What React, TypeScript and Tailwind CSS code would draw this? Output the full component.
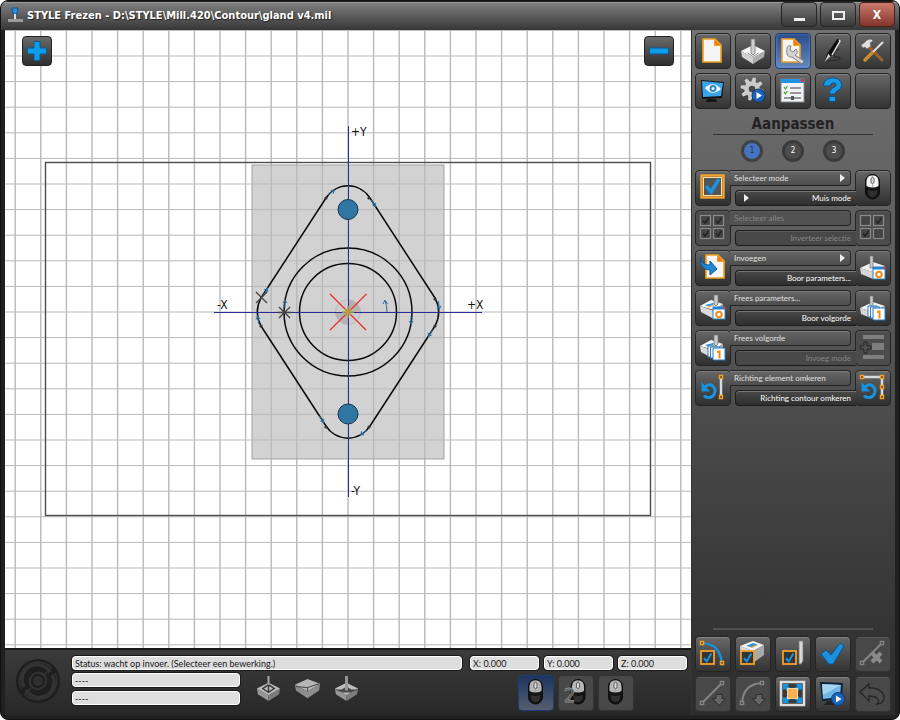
import type { ReactNode } from "react";

type IconProps = { children: ReactNode };

function Icon({ children }: IconProps) {
  return (
    <svg viewBox="0 0 36 36" className="size-9 shrink-0" aria-hidden="true">
      {children}
    </svg>
  );
}

/* ---------- drawing parts ---------- */

function PageShape({ x = 9, y = 6 }: { x?: number; y?: number }) {
  return (
    <g transform={`translate(${x} ${y})`}>
      <path d="M1 1h12l6 6v17H1z" fill="#f5f5f8" stroke="#f0a21e" strokeWidth="1.6" />
      <path d="M12.5 1l6.5 6.5h-6.5z" fill="#f47b12" stroke="#f0a21e" />
    </g>
  );
}

function Block({ tone = "light" }: { tone?: "light" | "grey" }) {
  const c = tone === "light" ? ["#f6f6f6", "#d2d2d2", "#aeaeae"] : ["#bdbdbd", "#969696", "#7c7c7c"];
  return (
    <g>
      <path d="M6 18l12-6 12 6-12 7z" fill={c[0]} />
      <path d="M6 18l12 7v6L7 24z" fill={c[1]} />
      <path d="M30 18l-12 7v6l11-7z" fill={c[2]} />
    </g>
  );
}

function SlabBlock() {
  return (
    <g>
      <path d="M5 16l11-6 12 4-9 6z" fill="#f8f8f8" />
      <path d="M10 15l8-2 3 1c-3 0-5 3-9 2z" fill="#3a94d2" />
      <path d="M11 16.500c4 1 6-2 10-2l-7 3z" fill="#f2a53a" />
      <path d="M5 16l14 5v8L6 22z" fill="#dcdcdc" />
      <path d="M19 21l9-7v8l-9 7z" fill="#a6a6a6" />
      <path d="M19 5h4v9l-2 2-2-2z" fill="#c9c9c9" stroke="#777" strokeWidth=".7" />
    </g>
  );
}

function DrillBlock() {
  return (
    <g>
      <path d="M5 18l13-6 12 4-12 6z" fill="#f0f0f0" />
      <path d="M5 18l13 4v7L6 24z" fill="#d6d6d6" />
      <path d="M30 16l-12 6v7l12-6z" fill="#a5a5a5" />
      <path d="M15 6h3v12h-3z" fill="#ccc" stroke="#777" strokeWidth=".7" />
    </g>
  );
}

function CheckBoxShape({ x, y, s = 13 }: { x: number; y: number; s?: number }) {
  return (
    <g>
      <rect x={x} y={y} width={s} height={s} fill="#343434" stroke="#f2a02c" strokeWidth="1.8" />
      <path
        d={`M${x + s * 0.22} ${y + s * 0.55}l${s * 0.22} ${s * 0.25}l${s * 0.36} ${-s * 0.6}`}
        fill="none"
        stroke="#1596e6"
        strokeWidth="2"
      />
    </g>
  );
}

function MouseShape({ dim = false }: { dim?: boolean }) {
  const top = dim ? "#b5b5b5" : "#f1f1f1";
  return (
    <g>
      <rect x="10.500" y="4.500" width="14" height="24.500" rx="7" fill="#141414" stroke="#0b0b0b" />
      <path d="M11.500 16c-.5-8 1-10.500 6-10.500s6.500 2.500 6 10.500q-6 3-12 0z" fill={top} />
      <path d="M13 20q4.500 2 9 0v3q-1 4-4.500 4t-4.500-4z" fill="#303030" />
      <rect x="16" y="7.500" width="3" height="6" rx="1.500" fill="#ddd" stroke="#555" strokeWidth=".9" />
      <path d="M17.500 5.500v2M17.500 13.500v3.500" stroke="#999" strokeWidth=".7" />
    </g>
  );
}

function NumberCards() {
  return (
    <g>
      <path d="M13 16h9v11h-9z" fill="#fff" stroke="#2b79bd" />
      <path d="M15.500 17h9v11h-9z" fill="#fff" stroke="#2b79bd" />
      <path d="M18 18h12v12H18z" fill="#fff" stroke="#2b79bd" />
      <path d="M22 22l2.500-.5v7" fill="none" stroke="#f08c15" strokeWidth="2" />
    </g>
  );
}

function ParameterCard() {
  return (
    <g>
      <rect x="18" y="17" width="12" height="12" fill="#fff" stroke="#2f7fc4" />
      <path d="M18 17h12v2.500H18z" fill="#2183d8" />
      <path d="M28 17h2v2h-2z" fill="#e33" />
      <circle cx="24" cy="24.500" r="2.800" fill="none" stroke="#f08c15" strokeWidth="2" />
    </g>
  );
}

function Node({ x, y, c = "#f2a02c" }: { x: number; y: number; c?: string }) {
  return <rect x={x - 1.5} y={y - 1.5} width="3" height="3" fill="#402c12" stroke={c} strokeWidth="1.500" />;
}

function RotateArrow() {
  return (
    <g>
      <path d="M10 17c5-5 12 0 9.500 6.500-2 5-8 5-10.500 2" fill="none" stroke="#1793df" strokeWidth="3" />
      <path d="M6.500 12v9.500H15z" fill="#1793df" />
    </g>
  );
}

function PlayBadge({ x = 24, y = 24 }: { x?: number; y?: number }) {
  return (
    <g>
      <circle cx={x} cy={y} r="6.500" fill="#1a63b8" stroke="#123c78" />
      <path d={`M${x - 2} ${y - 3.5}l5.500 3.500-5.500 3.500z`} fill="#fff" />
    </g>
  );
}

function CheckGrid({ checked }: { checked: number[] }) {
  const cells = [
    [5.5, 5.5],
    [18.5, 5.5],
    [5.5, 18.5],
    [18.5, 18.5],
  ];
  return (
    <g fill="none" stroke="#8b8b8b" strokeWidth="1.200">
      {cells.map(([x, y], i) => (
        <g key={i}>
          <rect x={x} y={y} width="10" height="10" fill="#444" />
          {checked.includes(i) && <path d={`M${x + 2.5} ${y + 5}l2 2.500 3.500-5`} stroke="#222" strokeWidth="1.400" />}
        </g>
      ))}
    </g>
  );
}

function DropMarker() {
  return <path d="M21 18.500h6v4h3.500l-6.500 7-6.500-7H21z" fill="#656565" stroke="#2c2c2c" />;
}

/* ---------- icons ---------- */

const gearTeeth = [0, 45, 90, 135, 180, 225, 270, 315];

const icons = {
  newPage: <PageShape x={7} y={5} />,
  block: (
    <g>
      <Block />
      <path d="M16 6h4v14l-2 2-2-2z" fill="#cfcfcf" stroke="#777" strokeWidth=".8" />
      <path d="M12.500 20l5.500 3.500 5.500-3.500" fill="none" stroke="#8b8b8b" />
    </g>
  ),
  edit: (
    <g>
      <PageShape x={6} y={5} />
      <path
        d="M12 16c0-3 2-4 4-3l-1 4 3 2 3-3c2 3 1 5-1 6l9 6-2 3-10-7c-4 1-6-3-5-8z"
        fill="#d4d4d4"
        stroke="#777"
        strokeWidth=".9"
      />
    </g>
  ),
  pen: (
    <g>
      <path d="M10 28c8 0 16-1 15-3-1-3-6 1-6-3s2-5 5-6" fill="none" stroke="#292929" strokeWidth="1.200" />
      <path d="M22 6l3 1-9 16-6 5 2-7z" fill="#0d0d0d" />
      <path d="M24 7l1 1-8 14" fill="none" stroke="#e7e7e7" strokeWidth="1.400" />
      <path d="M13.500 20.500L9.500 29l6-5.500" fill="#ccc" />
    </g>
  ),
  tools: (
    <g>
      <path d="M15 15l12 12" stroke="#a0622a" strokeWidth="3" strokeLinecap="round" />
      <path d="M28 9L17 20" stroke="#e5e5e5" strokeWidth="1.800" />
      <path d="M17 20l-7 7" stroke="#c98c2c" strokeWidth="3.600" strokeLinecap="round" />
      <path d="M6 12l3-2 3-3 4-1 2 2-3 2 1 3-4 3-2-2-2 1z" fill="#dedede" stroke="#666" strokeWidth=".6" />
    </g>
  ),
  view: (
    <g>
      <path d="M6 7l23 2-2 16-20 1z" fill="#111" />
      <path d="M7 8l21 2-2 13-18 1z" fill="#3aa6ea" />
      <path d="M13 26h8l1 3H10z" fill="#151515" />
      <path d="M10 15q8-8 16 1-9 8-16-1z" fill="#fff" />
      <circle cx="18" cy="15.500" r="3.500" fill="#2c84cb" />
      <circle cx="18" cy="15.500" r="1.500" fill="#fff" />
    </g>
  ),
  run: (
    <g>
      <g fill="#cfcfcf">
        {gearTeeth.map((a) => (
          <path key={a} d="M-2.200-7l.7-4.500h3l.7 4.500z" transform={`translate(17 16) rotate(${a + 12})`} />
        ))}
      </g>
      <circle cx="17" cy="16" r="5.500" fill="#484848" stroke="#cacaca" strokeWidth="4.500" />
      <PlayBadge x={23.500} y={22.500} />
    </g>
  ),
  settings: (
    <g>
      <rect x="6" y="6" width="23" height="23" fill="#f0f3f8" stroke="#888" />
      <path d="M6 6h23v4H6z" fill="#2193e3" />
      <path d="M26 6h3v3h-3z" fill="#d33" />
      <path d="M9 14l1.500 2 2-3M9 19l1.500 2 2-3" fill="none" stroke="#55a53c" strokeWidth="1.300" />
      <path d="M15 15h11M15 20h11M9 25h17" stroke="#777" strokeWidth="1.400" />
      <path d="M16 23h3v4h-3z" fill="#555" />
    </g>
  ),
  help: (
    <g>
      <path
        d="M8.500 13c0-11 18-10.500 18-1 0 6-6.500 5-6.500 9h-5.500c0-7 6.500-6 6.500-9 0-3-5-3-6 1z"
        fill="#169be6"
        stroke="#07538f"
      />
      <rect x="14" y="23.500" width="6.500" height="5" rx="1" fill="#169be6" stroke="#07538f" />
    </g>
  ),
  bigCheck: (
    <g>
      <rect x="6.500" y="5.500" width="22" height="22" fill="#555" stroke="#f5a32f" strokeWidth="2.400" />
      <rect x="8.500" y="7.500" width="18" height="18" fill="none" stroke="#fce0a4" />
      <path d="M11 16l5 6 8-13" fill="none" stroke="#1793e2" strokeWidth="3.500" />
    </g>
  ),
  mouse: <MouseShape />,
  mouseDim: <MouseShape dim />,
  doubleMouse: (
    <g>
      <g transform="translate(2.500 0)">
        <MouseShape dim />
      </g>
      <text
        x="6"
        y="27"
        fontSize="20"
        fill="#3a3a3a"
        stroke="#8e8e8e"
        strokeWidth=".8"
        className="font-['DejaVu_Sans_Condensed','DejaVu_Sans',sans-serif]"
      >
        2
      </text>
    </g>
  ),
  selectAll: <CheckGrid checked={[0, 1, 2, 3]} />,
  invert: <CheckGrid checked={[1, 2]} />,
  insert: (
    <g>
      <PageShape x={10} y={4} />
      <path d="M6 7c0 6 3 8 9 8v-4l7 8-7 6v-5C8 20 4 14 6 7z" fill="#2187d2" stroke="#0d579a" />
    </g>
  ),
  millParams: (
    <g>
      <SlabBlock />
      <ParameterCard />
    </g>
  ),
  drillParams: (
    <g>
      <DrillBlock />
      <ParameterCard />
    </g>
  ),
  millOrder: (
    <g>
      <SlabBlock />
      <NumberCards />
    </g>
  ),
  drillOrder: (
    <g>
      <DrillBlock />
      <NumberCards />
    </g>
  ),
  insertMode: (
    <g fill="#7e7e7e">
      <path d="M8 5h21v4H8zM17 13h12v7H17zM8 25h21v4H8z" />
      <path d="M9 12h3v4h4v3h-4v4H9v-4H5v-3h4z" fill="#555" stroke="#222" />
    </g>
  ),
  reverseElement: (
    <g>
      <RotateArrow />
      <path d="M26 7v20" stroke="#d6dde2" strokeWidth="2.500" />
      <Node x={26} y={7} />
      <Node x={26} y={27} />
    </g>
  ),
  reverseContour: (
    <g>
      <RotateArrow />
      <path d="M7 7h20v20" fill="none" stroke="#d6dde2" strokeWidth="2.500" />
      <Node x={7} y={7} />
      <Node x={27} y={7} />
      <Node x={27} y={17} />
      <Node x={27} y={27} />
    </g>
  ),
  arcCheck: (
    <g>
      <path d="M7 7c12 1 18 6 20 20" fill="none" stroke="#1793e2" strokeWidth="2.200" />
      <Node x={7} y={7} />
      <Node x={27} y={27} />
      <CheckBoxShape x={6} y={15} />
    </g>
  ),
  pocketCheck: (
    <g>
      <path d="M5 10l13-5 11 4-11 6z" fill="#f4f4f4" />
      <path d="M5 10l13 5v12L6 22z" fill="#d9d9d9" />
      <path d="M29 9l-11 6v12l11-8z" fill="#a9a9a9" />
      <path d="M11 10l7-3 5 2-7 2z" fill="#2e8fd2" />
      <path d="M15 11.500l4-2 4-.500-6 3z" fill="#f0a23a" />
      <CheckBoxShape x={6} y={15} />
    </g>
  ),
  toolCheck: (
    <g>
      <path d="M24 5h4v20l-2 3h-2z" fill="#d9d9d9" stroke="#777" strokeWidth=".8" />
      <CheckBoxShape x={8} y={15} />
    </g>
  ),
  confirm: <path d="M6 18l5-4 5 5 9-12 4 3-11 18h-4z" fill="#1b90df" stroke="#0b5596" />,
  lineDelete: (
    <g stroke="#858585">
      <path d="M7 27L27 7" strokeWidth="2" />
      <Node x={7} y={27} c="#858585" />
      <Node x={27} y={7} c="#858585" />
      <path d="M17 17l9 9M26 17l-9 9" stroke="#8b8b8b" strokeWidth="4" />
    </g>
  ),
  lineInsert: (
    <g stroke="#858585">
      <path d="M7 27L27 7" strokeWidth="2" />
      <Node x={7} y={27} c="#858585" />
      <Node x={27} y={7} c="#858585" />
      <DropMarker />
    </g>
  ),
  arcInsert: (
    <g stroke="#858585">
      <path d="M7 27C8 14 14 8 27 7" fill="none" strokeWidth="2" />
      <Node x={7} y={27} c="#858585" />
      <Node x={27} y={7} c="#858585" />
      <DropMarker />
    </g>
  ),
  fit: (
    <g>
      <rect x="6" y="6" width="23" height="23" fill="#3c3c3c" stroke="#dedede" strokeWidth="2.500" />
      <path
        d="M8 8h6l-1 2 3 3-3 3-3-3-2 1zM27 8h-6l1 2-3 3 3 3 3-3 2 1zM8 27h6l-1-2 3-3-3-3-3 3-2-1zM27 27h-6l1-2-3-3 3-3 3 3 2-1z"
        fill="#1793e2"
      />
      <rect x="12.500" y="12.500" width="10" height="10" fill="#f7b04f" stroke="#fbd79d" />
    </g>
  ),
  simulate: (
    <g>
      <path d="M5 6l23 1-1 16-20 2z" fill="#0c2036" />
      <path d="M7 8l19 1-1 12-17 2z" fill="#6db6e8" />
      <path d="M7 8l19 1-18 10z" fill="#a5d3ef" />
      <path d="M12 25h7l1 4H9z" fill="#222" />
      <PlayBadge x={23} y={23} />
    </g>
  ),
  undo: (
    <path
      d="M5 16l9-8v4c9-1 16 5 15 11-1 3-4 5-7 5 4-3 1-8-8-8v5z"
      fill="#4a4a4a"
      stroke="#252525"
      strokeWidth="1.300"
    />
  ),
  none: null,
};

type IconName = keyof typeof icons;

/* ---------- controls ---------- */

const tileLook =
  "size-9 rounded-sm border border-[#242424] bg-linear-to-b from-[#686868] to-[#343434] shadow-[inset_0_1px_0_#858585]";
const activeLook =
  "size-9 rounded-sm border border-[#1c3f77] bg-linear-to-b from-[#2b4c8a] to-[#6588bd] shadow-[inset_0_0_2px_#72a4f0]";
const disabledLook = "size-9 rounded-sm border border-[#313131] bg-[#484848] shadow-[inset_0_1px_0_#585858]";

type TileProps = { icon: IconName; label: string; look?: "normal" | "active" | "disabled" };

function Tile({ icon, label, look = "normal" }: TileProps) {
  const cls = look === "active" ? activeLook : look === "disabled" ? disabledLook : tileLook;
  return (
    <button type="button" aria-label={label} disabled={look === "disabled"} className={`${cls} flex items-center justify-center`}>
      <Icon>{icons[icon]}</Icon>
    </button>
  );
}

type Half = { text: string; icon: IconName; arrow?: boolean; disabled?: boolean };

function PlayMark() {
  return (
    <svg viewBox="0 0 5 8" className="h-2 w-[5px]" aria-hidden="true">
      <path d="M0 0l5 4-5 4z" fill="#eee" />
    </svg>
  );
}

function SplitRow({ left, right }: { left: Half; right: Half }) {
  return (
    <div className="grid">
      <button
        type="button"
        disabled={left.disabled}
        className="pointer-events-none col-start-1 row-start-1 mr-10 flex items-start text-[#e0e0e0] disabled:text-[#858585]"
      >
        <span
          className={`pointer-events-auto flex size-9 shrink-0 items-center justify-center rounded-sm border border-[#242424] ${
            left.disabled
              ? "bg-[#4c4c4c] shadow-[inset_0_1px_0_#5c5c5c]"
              : "bg-linear-to-b from-[#666] to-[#303030] shadow-[inset_0_1px_0_#7d7d7d]"
          }`}
        >
          <Icon>{icons[left.icon]}</Icon>
        </span>
        <span
          className={`pointer-events-auto z-10 -ml-px flex h-4 grow items-center justify-between rounded-r-sm border border-l-0 border-[#242424] pr-[5px] pl-1 ${
            left.disabled
              ? "bg-[#525252] shadow-[inset_0_1px_0_#5c5c5c]"
              : "bg-linear-to-b from-[#666] to-[#4e4e4e] shadow-[inset_0_1px_0_#7d7d7d]"
          }`}
        >
          {left.text}
          {left.arrow && <PlayMark />}
        </span>
      </button>
      <button
        type="button"
        disabled={right.disabled}
        className="pointer-events-none col-start-1 row-start-1 ml-10 flex items-end text-white disabled:text-[#858585]"
      >
        <span
          className={`pointer-events-auto z-10 -mr-px flex h-4 grow items-center rounded-l-sm border border-r-0 border-[#1c1c1c] pr-[5px] pl-2 ${
            right.disabled
              ? "bg-[#484848] shadow-[inset_0_1px_0_#5c5c5c]"
              : "bg-linear-to-b from-[#4a4a4a] to-[#2e2e2e] shadow-[inset_0_1px_0_#777]"
          }`}
        >
          {right.arrow && <PlayMark />}
          <span className="ml-auto">{right.text}</span>
        </span>
        <span
          className={`pointer-events-auto flex size-9 shrink-0 items-center justify-center rounded-sm border border-[#242424] ${
            right.disabled
              ? "bg-[#4c4c4c] shadow-[inset_0_1px_0_#5c5c5c]"
              : "bg-linear-to-b from-[#666] to-[#303030] shadow-[inset_0_1px_0_#7d7d7d]"
          }`}
        >
          <Icon>{icons[right.icon]}</Icon>
        </span>
      </button>
    </div>
  );
}

function Field({ label, value, className }: { label: string; value: string; className: string }) {
  return (
    <input
      readOnly
      aria-label={label}
      value={value}
      className={`h-[14px] min-w-0 rounded-[3px] border border-white bg-[#dedede] px-0.5 font-[Lato,sans-serif] text-[9px] text-[#161616] outline-1 outline-[#1a1a1a] ${className}`}
    />
  );
}

/* ---------- drawing area ---------- */

const PITCH = 25.6;
const columns = Array.from({ length: 80 }, (_, i) => 348 + (i - 40) * PITCH);
const rows = Array.from({ length: 80 }, (_, i) => 312 + (i - 40) * PITCH);
const marks: [number, number, number][] = [
  [332, 192, 50],
  [374, 204, 145],
  [266, 291, 30],
  [285, 303, 0],
  [439, 306, 175],
  [258, 319, -10],
  [411, 321, 180],
  [430, 334, 215],
  [322, 420, 145],
  [363, 433, 235],
];
const joints = [
  [326, 198],
  [369, 198],
  [435, 299],
  [435, 326],
  [261, 326],
  [326, 427],
  [369, 427],
];

function Drawing() {
  return (
    <svg
      viewBox="5 30 686 618"
      preserveAspectRatio="xMidYMid slice"
      className="size-full"
      role="img"
      aria-label="Contour gland v4"
    >
      <rect x="252" y="165" width="192" height="294" fill="#d2d2d2" />
      <g stroke="#b9b9b9">
        {columns.map((x) => (
          <path key={x} d={`M${x} -712V1336`} strokeWidth="1.400" />
        ))}
        {rows.map((y) => (
          <path key={y} d={`M-676 ${y}H1372`} />
        ))}
      </g>
      <rect x="252" y="165" width="192" height="294" fill="none" stroke="#a2a2a2" />
      <rect x="45.500" y="162.500" width="605" height="353" fill="none" stroke="#4d4d4d" strokeWidth="1.400" />
      <circle cx="348" cy="312" r="12.500" fill="#cdcdcd" stroke="#bbb" />
      <path d="M348 312V299.500A12.500 12.500 0 0 1 360.500 312zM348 312v12.500A12.500 12.500 0 0 1 335.500 312z" fill="#b3b3b3" />
      <g fill="none" stroke="#0a0a0a" strokeWidth="1.500">
        <path d="M326 198A26 26 0 0 1 370 198L435 298A30 30 0 0 1 435 326L370 426A26 26 0 0 1 326 426L261 326A30 30 0 0 1 261 298Z" />
        <circle cx="348" cy="312" r="64" />
        <circle cx="348" cy="312" r="48.500" />
      </g>
      <path d="M348.500 126V497M214 312.500H482" stroke="#2b2b98" strokeWidth="1" />
      <circle cx="348" cy="209.500" r="10" fill="#2f76a3" stroke="#16384f" />
      <circle cx="348" cy="414" r="10" fill="#2f76a3" stroke="#16384f" />
      <path d="M330 294l36 36" stroke="#f02c2c" strokeWidth="1.200" />
      <path d="M330 330l36.500-36" stroke="#f02c2c" strokeWidth="1.200" />
      <path d="M348 306v12M342 312h12M345 309l6 6M351 309l-6 6" stroke="#b3a23e" strokeWidth="1.400" />
      <g stroke="#2a6f9f" fill="none">
        {marks.map(([x, y, a]) => (
          <path key={`${x}-${y}`} transform={`translate(${x} ${y}) rotate(${a})`} d="M0 5V-3M-2 0L0-3 2 0" />
        ))}
        <path d="M387 312q0-7-2-11M383 304l2-4 2.500 4" />
      </g>
      {joints.map(([x, y]) => (
        <circle key={`${x}-${y}`} cx={x} cy={y} r="1.600" fill="#333" />
      ))}
      <g stroke="#444" strokeWidth="1.400">
        <path d="M256 292l11 11M267 292l-11 11" />
        <path d="M279 307l11 11M290 307l-11 11M278 312.500h13" />
      </g>
      <g fill="#111" fontSize="12" className="font-['DejaVu_Sans_Condensed','DejaVu_Sans',sans-serif]">
        <text x="351" y="136">+Y</text>
        <text x="351" y="495">-Y</text>
        <text x="217" y="309">-X</text>
        <text x="467" y="309">+X</text>
      </g>
    </svg>
  );
}

function ZoomButton({ label, plus }: { label: string; plus?: boolean }) {
  return (
    <button
      type="button"
      aria-label={label}
      className="size-[30px] rounded-sm border border-[#222] bg-linear-to-b from-[#6a6a6a] to-[#2f2f2f]"
    >
      <svg viewBox="0 0 28 28" aria-hidden="true">
        <path
          d={plus ? "M11 4.500h6V11h6.500v6H17v6.500h-6V17H4.500v-6H11z" : "M4.500 11h19v6h-19z"}
          fill="#0f9be8"
          stroke="#0a5b91"
        />
      </svg>
    </button>
  );
}

/* ---------- window ---------- */

function TitleBar() {
  return (
    <header className="flex h-[29px] shrink-0 items-start bg-linear-to-b from-[#858585] to-[#373737] pr-1 pl-1.5 shadow-[inset_0_1px_0_#222,inset_0_2px_0_#999]">
      <svg viewBox="0 0 18 20" className="mt-1 h-5 w-[18px]" aria-hidden="true">
        <path d="M1 14h15v3H1z" fill="#9c9c9c" />
        <path d="M5 3h6l-1 6H6z" fill="#2694e4" stroke="#125288" />
        <path d="M7 9h2v5H7z" fill="#ddd" />
      </svg>
      <h1 className="mt-[7px] ml-0.5 text-[11px] leading-4 font-bold text-white [text-shadow:1px_1px_1px_#222]">
        STYLE Frezen - D:\STYLE\Mill.420\Contour\gland v4.mil
      </h1>
      <div className="mt-px ml-auto flex gap-[3px]">
        <button type="button" aria-label="Minimaliseren" className="flex h-[25px] w-9 justify-center rounded-sm border border-[#262626] bg-linear-to-b from-[#777] to-[#3a3a3a]">
          <span className="mt-[15px] h-[3px] w-[11px] bg-[#eee]" />
        </button>
        <button type="button" aria-label="Maximaliseren" className="flex h-[25px] w-9 justify-center rounded-sm border border-[#262626] bg-linear-to-b from-[#777] to-[#3a3a3a]">
          <span className="mt-[8px] h-[9px] w-[13px] border-2 border-[#eee]" />
        </button>
        <button type="button" aria-label="Sluiten" className="h-[25px] w-9 rounded-sm border border-[#4a201a] bg-linear-to-b from-[#cb7a6e] to-[#84342a] text-xs leading-none font-bold text-white">
          X
        </button>
      </div>
    </header>
  );
}

function StatusBar() {
  return (
    <footer className="flex h-[67px] shrink-0 border-t-2 border-[#1a1a1a] bg-linear-to-b from-[#3b3b3b] to-[#282828] pr-1">
      <svg viewBox="0 0 46 46" className="mt-2 ml-2.5 size-[46px] shrink-0" aria-hidden="true">
        <circle cx="23" cy="23" r="22" fill="#1e1e1e" />
        <g fill="none" stroke="#333">
          <path d="M36 9A19 19 0 0 0 6 31M10 37A19 19 0 0 0 40 15" strokeWidth="1.500" />
          <path d="M35 14A15 15 0 0 0 9 29M11 32A15 15 0 0 0 37 17" strokeWidth="3.500" />
          <path d="M37 9l-9 9M9 37l9-9" strokeWidth="1.500" />
          <path d="M29 17a8.500 8.500 0 0 0-12 12M17 29a8.500 8.500 0 0 0 12-12" strokeWidth="2" />
        </g>
        <circle cx="23" cy="23" r="5" fill="#303030" />
      </svg>
      <div className="ml-[11px] flex min-w-0 grow flex-col pt-[6px]">
        <div className="flex gap-[5px]">
          <Field label="Status" value="Status: wacht op invoer. (Selecteer een bewerking.)" className="mr-[3px] grow" />
          <Field label="X positie" value="X: 0.000" className="w-[69px]" />
          <Field label="Y positie" value="Y: 0.000" className="w-[69px]" />
          <Field label="Z positie" value="Z: 0.000" className="w-[69px]" />
        </div>
        <div className="flex items-start">
          <div className="mt-[3px] flex w-[168px] shrink-0 flex-col gap-1">
            <Field label="Melding 1" value="----" className="w-full" />
            <Field label="Melding 2" value="----" className="w-full" />
          </div>
          <div className="mt-1.5 ml-[15px] flex gap-3">
            <svg viewBox="4 5 28 28" className="size-[27px]" aria-hidden="true">
              <Block tone="grey" />
              <path d="M18 6v16M12 18l6-4 6 4-6 4z" fill="none" stroke="#3a3a3a" strokeWidth="1.500" />
              <path d="M17 5h2v9h-2z" fill="#aaa" />
            </svg>
            <svg viewBox="4 5 28 28" className="size-[27px]" aria-hidden="true">
              <path d="M5 14l13-6 13 5-13 8z" fill="#b5b5b5" />
              <path d="M5 14l13 7v7L6 20zM31 13l-13 8v7l12-8z" fill="#8d8d8d" />
              <path d="M6 16l12 1 12-4M18 21v-4" fill="none" stroke="#444" />
            </svg>
            <svg viewBox="4 5 28 28" className="size-[27px]" aria-hidden="true">
              <Block tone="grey" />
              <path d="M6 19h7l5-3 5 3h7l-8 3h-8z" fill="#464646" />
              <path d="M16.500 5h3v15h-3z" fill="#999" />
            </svg>
          </div>
          <div className="mt-[5px] mr-[53px] ml-auto flex gap-1">
            <button type="button" aria-label="Linker muisknop" className="flex size-9 items-center justify-center rounded-sm border border-[#1d3e74] bg-linear-to-b from-[#1c355f] to-[#565e6d]">
              <Icon>{icons.mouseDim}</Icon>
            </button>
            <button type="button" aria-label="Dubbelklik" className="flex size-9 items-center justify-center rounded-sm border border-[#333] bg-[#484848]">
              <Icon>{icons.doubleMouse}</Icon>
            </button>
            <button type="button" aria-label="Rechter muisknop" className="flex size-9 items-center justify-center rounded-sm border border-[#333] bg-[#484848]">
              <Icon>{icons.mouseDim}</Icon>
            </button>
          </div>
        </div>
      </div>
    </footer>
  );
}

function SidePanel() {
  return (
    <aside className="flex w-[204px] shrink-0 flex-col border-l border-[#333] bg-linear-to-b from-[#727272] via-[#505050] to-[#2b2b2b] py-[3px] pr-1 pl-[3px]">
      <nav className="grid grid-cols-5 gap-1" aria-label="Hoofdmenu">
        <Tile icon="newPage" label="Nieuw" />
        <Tile icon="block" label="Materiaal" />
        <Tile icon="edit" label="Aanpassen" look="active" />
        <Tile icon="pen" label="Tekenen" />
        <Tile icon="tools" label="Gereedschap" />
        <Tile icon="view" label="Weergave" />
        <Tile icon="run" label="Uitvoeren" />
        <Tile icon="settings" label="Instellingen" />
        <Tile icon="help" label="Help" />
        <Tile icon="none" label="Leeg" />
      </nav>
      <h2 className="mx-[18px] mt-[5px] border-b border-[#333] text-center text-[15px] leading-5 font-bold text-[#222]">
        Aanpassen
      </h2>
      <div className="mt-[5px] mb-2 flex justify-center gap-[19px]">
        <button type="button" className="size-[22px] rounded-full border-[3px] border-[#404040] bg-[#4673bd] text-[8px] leading-none text-[#16305e]">
          1
        </button>
        <button type="button" className="size-[22px] rounded-full border-[3px] border-[#3a3a3a] bg-[#4d4d4d] text-[8px] leading-none text-white">
          2
        </button>
        <button type="button" className="size-[22px] rounded-full border-[3px] border-[#3a3a3a] bg-[#4d4d4d] text-[8px] leading-none text-white">
          3
        </button>
      </div>
      <div className="flex flex-col gap-1 font-[Lato,sans-serif] text-[8px] leading-none">
        <SplitRow left={{ text: "Selecteer mode", icon: "bigCheck", arrow: true }} right={{ text: "Muis mode", icon: "mouse", arrow: true }} />
        <SplitRow left={{ text: "Selecteer alles", icon: "selectAll", disabled: true }} right={{ text: "Inverteer selectie", icon: "invert", disabled: true }} />
        <SplitRow left={{ text: "Invoegen", icon: "insert", arrow: true }} right={{ text: "Boor parameters...", icon: "drillParams" }} />
        <SplitRow left={{ text: "Frees parameters...", icon: "millParams" }} right={{ text: "Boor volgorde", icon: "drillOrder" }} />
        <SplitRow left={{ text: "Frees volgorde", icon: "millOrder" }} right={{ text: "Invoeg mode", icon: "insertMode", disabled: true }} />
        <SplitRow left={{ text: "Richting element omkeren", icon: "reverseElement" }} right={{ text: "Richting contour omkeren", icon: "reverseContour" }} />
      </div>
      <hr className="mx-[18px] mt-auto mb-1.5 border-t-2 border-[#505050]" />
      <div className="grid grid-cols-5 gap-1">
        <Tile icon="arcCheck" label="Selecteer boog" />
        <Tile icon="pocketCheck" label="Selecteer kamer" />
        <Tile icon="toolCheck" label="Selecteer gereedschap" />
        <Tile icon="confirm" label="Bevestigen" />
        <Tile icon="lineDelete" label="Verwijderen" look="disabled" />
        <Tile icon="lineInsert" label="Lijn invoegen" look="disabled" />
        <Tile icon="arcInsert" label="Boog invoegen" look="disabled" />
        <Tile icon="fit" label="Passend maken" />
        <Tile icon="simulate" label="Simuleren" />
        <Tile icon="undo" label="Ongedaan maken" look="disabled" />
      </div>
    </aside>
  );
}

export default function App() {
  return (
    <div className="h-screen bg-white font-['DejaVu_Sans_Condensed','DejaVu_Sans',sans-serif]">
      <div className="flex h-full flex-col overflow-hidden rounded-lg border border-[#111] bg-[#202020]">
        <TitleBar />
        <div className="mx-1 mb-1 flex min-h-0 grow">
          <div className="flex min-w-0 grow flex-col">
            <main className="grid min-h-0 grow bg-white">
              <div className="col-start-1 row-start-1 min-h-0 overflow-hidden">
                <Drawing />
              </div>
              <div className="z-10 col-start-1 row-start-1 flex items-start justify-between px-[17px] pt-[6px]">
                <ZoomButton label="Inzoomen" plus />
                <ZoomButton label="Uitzoomen" />
              </div>
            </main>
            <StatusBar />
          </div>
          <SidePanel />
        </div>
      </div>
    </div>
  );
}
